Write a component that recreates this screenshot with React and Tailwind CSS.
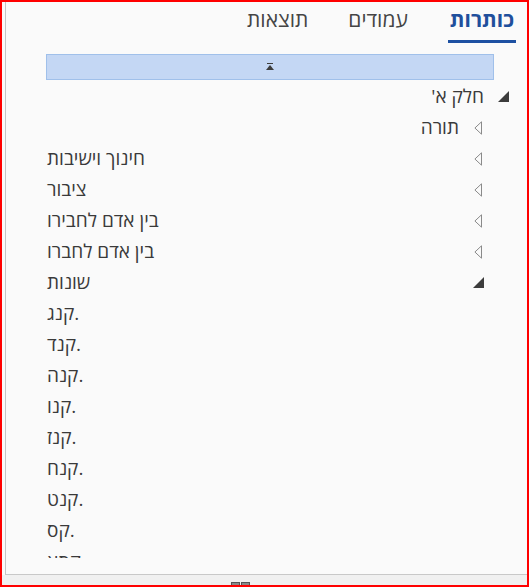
import React from "react";

const Filled = () => (
  <svg width="11" height="11" viewBox="0 0 11 11" className="block">
    <path d="M11 0 L11 11 L0 11 Z" fill="#3c3c3c" />
  </svg>
);

const Open = () => (
  <svg width="8" height="14" viewBox="0 0 8 14" className="block">
    <path d="M7.5 0.8 L7.5 13.2 L0.9 7 Z" fill="none" stroke="#8a8a8a" strokeWidth="1" />
  </svg>
);

const rows = [
  { text: "חלק א'", level: 0, tri: "filled", left: false },
  { text: "תורה", level: 1, tri: "open", left: false },
  { text: "חינוך וישיבות", level: 1, tri: "open", left: true },
  { text: "ציבור", level: 1, tri: "open", left: true },
  { text: "בין אדם לחבירו", level: 1, tri: "open", left: true },
  { text: "בין אדם לחברו", level: 1, tri: "open", left: true },
  { text: "שונות", level: 1, tri: "filled", left: true },
  { text: "קנג.", level: 2, tri: null, left: true },
  { text: "קנד.", level: 2, tri: null, left: true },
  { text: "קנה.", level: 2, tri: null, left: true },
  { text: "קנו.", level: 2, tri: null, left: true },
  { text: "קנז.", level: 2, tri: null, left: true },
  { text: "קנח.", level: 2, tri: null, left: true },
  { text: "קנט.", level: 2, tri: null, left: true },
  { text: "קס.", level: 2, tri: null, left: true },
  { text: "קסא.", level: 2, tri: null, left: true },
];

function Row({ r }) {
  const pr = r.level === 0 ? "pr-[18px]" : "pr-[43px]";
  return (
    <div dir="rtl" className={`flex h-[31px] items-center ${pr}`}>
      <div className="flex w-[11px] shrink-0 justify-start">
        {r.tri === "filled" && <Filled />}
        {r.tri === "open" && (
          <div className="pr-[2px]">
            <Open />
          </div>
        )}
      </div>
      {r.left ? (
        <div dir="ltr" className="flex-1 text-left pr-[14px] leading-none">
          {r.text}
        </div>
      ) : (
        <div className="pr-[14px] leading-none">{r.text}</div>
      )}
    </div>
  );
}

export default function App() {
  return (
    <div
      className="w-[529px] h-[587px] border-2 border-[#ff0000] bg-[#fafafa] overflow-hidden flex flex-col text-[#3a3a3a]"
      style={{ fontFamily: '"Open Sans", "DejaVu Sans", sans-serif' }}
    >
      <div className="flex-1 min-h-0 ml-[3px] border-l border-[#c4c4c4] flex flex-col">
        <div dir="rtl" className="flex h-[41px] shrink-0 pr-[11px] gap-[40px] text-[21px]">
          <div className="flex items-start pt-[2px] px-[2px] border-b-[3px] border-[#1d50a2] text-[#1f4f9c] font-bold">
            כותרות
          </div>
          <div className="flex items-start pt-[2px] text-[#454545]">עמודים</div>
          <div className="flex items-start pt-[2px] text-[#454545]">תוצאות</div>
        </div>
        <div className="mt-[11px] ml-[40px] mr-[33px] h-[26px] shrink-0 bg-[#c4d7f4] border border-[#a0c0ea] flex items-center justify-center">
          <svg width="10" height="8" viewBox="0 0 10 8" className="block">
            <rect x="2" y="0" width="6" height="1" fill="#3c3c3c" />
            <path d="M5 2 L9 7 L1 7 Z" fill="#3c3c3c" />
          </svg>
        </div>
        <div className="h-[478px] shrink-0 overflow-hidden pt-[1px] pl-[41px] text-[19px]">
          {rows.map((r, i) => (
            <Row key={i} r={r} />
          ))}
        </div>
        <div className="flex-1 border-b border-[#c8c8c8]" />
      </div>
      <div className="h-[10px] shrink-0 bg-[#f0f0f0] relative overflow-hidden">
        <div className="ml-[229px] mt-[7px] flex gap-[1px]">
          <div className="w-[9px] h-[6px] border border-[#555] bg-[#888]" />
          <div className="w-[9px] h-[6px] border border-[#555] bg-[#888]" />
        </div>
      </div>
    </div>
  );
}
